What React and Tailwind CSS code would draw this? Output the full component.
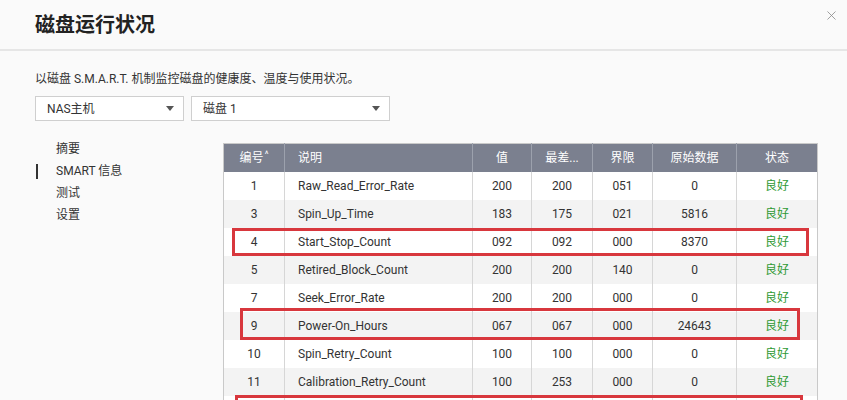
import { X } from "lucide-react";

const rows = [
    ["1", "Raw_Read_Error_Rate", "200", "200", "051", "0", "良好"],
    ["3", "Spin_Up_Time", "183", "175", "021", "5816", "良好"],
    ["4", "Start_Stop_Count", "092", "092", "000", "8370", "良好"],
    ["5", "Retired_Block_Count", "200", "200", "140", "0", "良好"],
    ["7", "Seek_Error_Rate", "200", "200", "000", "0", "良好"],
    ["9", "Power-On_Hours", "067", "067", "000", "24643", "良好"],
    ["10", "Spin_Retry_Count", "100", "100", "000", "0", "良好"],
    ["11", "Calibration_Retry_Count", "100", "253", "000", "0", "良好"],
    ["", "", "", "", "", "", ""]
];

const navItems = ["摘要", "SMART 信息", "测试", "设置"];

function Select({ label, width }) {
    return (
        <div
            className={`${width} h-[25px] bg-white border border-[#cfcfcf] flex items-center justify-between pl-[11px] pr-[9px] text-[12px] text-[#333]`}
        >
            <span>{label}</span>
            <span className="w-0 h-0 border-l-[4px] border-r-[4px] border-t-[5px] border-l-transparent border-r-transparent border-t-[#555]" />
        </div>
    );
}

export default function App() {
    return (
        <div
            className="w-[847px] h-[400px] overflow-hidden bg-[#fafafa] relative text-[#333]"
            style={{ fontFamily: 'Roboto, "Noto Sans CJK SC", sans-serif' }}
        >
            {/* Header */}
            <div className="h-[51px] border-b-2 border-[#e6e6e6] flex items-center pl-[35px]">
                <h1 className="text-[20px] font-bold text-[#222]">磁盘运行状况</h1>
            </div>
            <button className="absolute top-[8px] right-[8px] text-[#8a8a8a]">
                <X className="w-[15px] h-[15px]" strokeWidth={1.3} />
            </button>

            <div className="pl-[35px]">
                <p className="pt-[20px] text-[12px] leading-[16px] text-[#333]">
                    以磁盘 S.M.A.R.T. 机制监控磁盘的健康度、温度与使用状况。
                </p>

                <div className="flex gap-[7px] mt-[9px]">
                    <Select label="NAS主机" width="w-[149px]" />
                    <Select label="磁盘 1" width="w-[199px]" />
                </div>

                <div className="flex mt-[17px]">
                    {/* Side nav */}
                    <ul className="w-[188px] text-[12px]">
                        {navItems.map((item, i) => (
                            <li key={item} className="h-[22px] flex items-center">
                                <span
                                    className={`w-[2px] h-[15px] ml-[1px] ${i === 1 ? "bg-[#333]" : ""}`}
                                />
                                <span className="ml-[18px]">{item}</span>
                            </li>
                        ))}
                    </ul>

                    {/* SMART table */}
                    <div className="relative mt-[5px]">
                        <table className="table-fixed border-collapse w-[594px] text-[12px] border border-[#c9c9c9]">
                            <colgroup>
                                <col className="w-[61px]" />
                                <col className="w-[188px]" />
                                <col className="w-[59px]" />
                                <col className="w-[61px]" />
                                <col className="w-[60px]" />
                                <col className="w-[84px]" />
                                <col className="w-[81px]" />
                            </colgroup>
                            <thead>
                                <tr className="h-[28px] bg-[#7b808f] text-white">
                                    <th className="font-normal border-r border-[#9ca1ad]">
                                        编号<sup className="text-[9px] ml-[1px]">^</sup>
                                    </th>
                                    <th className="font-normal text-left pl-[13px] border-r border-[#9ca1ad]">
                                        说明
                                    </th>
                                    <th className="font-normal border-r border-[#9ca1ad]">值</th>
                                    <th className="font-normal border-r border-[#9ca1ad]">最差...</th>
                                    <th className="font-normal border-r border-[#9ca1ad]">界限</th>
                                    <th className="font-normal border-r border-[#9ca1ad]">原始数据</th>
                                    <th className="font-normal">状态</th>
                                </tr>
                            </thead>
                            <tbody>
                                {rows.map((r, i) => (
                                    <tr
                                        key={i}
                                        className={`h-[28px] ${i % 2 === 0 ? "bg-white" : "bg-[#f3f3f3]"}`}
                                    >
                                        <td className="text-center border-r border-[#d6d6d6]">{r[0]}</td>
                                        <td className="pl-[13px] border-r border-[#d6d6d6]">{r[1]}</td>
                                        <td className="text-center border-r border-[#d6d6d6]">{r[2]}</td>
                                        <td className="text-center border-r border-[#d6d6d6]">{r[3]}</td>
                                        <td className="text-center border-r border-[#d6d6d6]">{r[4]}</td>
                                        <td className="text-center border-r border-[#d6d6d6]">{r[5]}</td>
                                        <td className="text-center text-[#2f9a34]">{r[6]}</td>
                                    </tr>
                                ))}
                            </tbody>
                        </table>

                        {/* Highlight annotations */}
                        <div className="absolute left-[9px] top-[85px] w-[577px] h-[28px] border-[3px] border-[#d8373d]" />
                        <div className="absolute left-[17px] top-[165px] w-[560px] h-[32px] border-[3px] border-[#d8373d]" />
                        <div className="absolute left-[12px] top-[252px] w-[568px] h-[30px] border-[3px] border-[#d8373d]" />
                    </div>
                </div>
            </div>
        </div>
    );
}
